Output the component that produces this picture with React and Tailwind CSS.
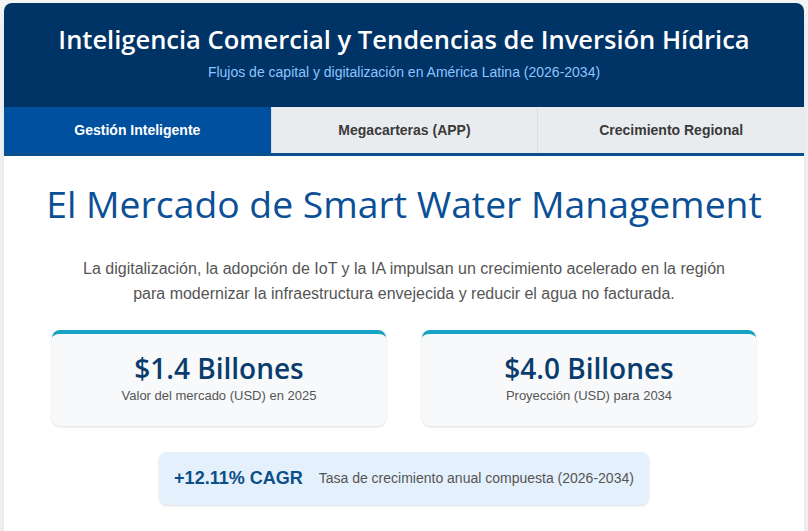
const tabs = ['Gestión Inteligente', 'Megacarteras (APP)', 'Crecimiento Regional'];

const stats = [
  { value: '$1.4 Billones', label: 'Valor del mercado (USD) en 2025' },
  { value: '$4.0 Billones', label: 'Proyección (USD) para 2034' },
];

const display = { fontFamily: '"Open Sans", "Noto Sans", sans-serif' };

export default function App() {
  return (
    <div className="min-h-screen bg-[#f3f4f6] px-[4px] pt-[3px]" style={{ fontFamily: '"Liberation Sans", Arial, sans-serif' }}>
      <div className="overflow-hidden rounded-t-lg bg-white shadow-lg">
        {/* Header */}
        <div className="flex h-[104px] flex-col items-center justify-center bg-[#003366] pb-[6px]">
          <h1 className="text-[25.5px] font-semibold leading-[32px] text-white" style={display}>
            Inteligencia Comercial y Tendencias de Inversión Hídrica
          </h1>
          <p className="mt-[7px] text-[14px] leading-[20px] text-[#8cc4ff]">
            Flujos de capital y digitalización en América Latina (2026-2034)
          </p>
        </div>

        {/* Tabs */}
        <div className="grid grid-cols-3 border-b-[3px] border-[#0b4f8a]">
          {tabs.map((tab, i) => (
            <button
              key={tab}
              type="button"
              className={
                i === 0
                  ? 'h-[46px] bg-[#0050a0] text-[14px] font-bold text-white'
                  : 'h-[46px] border-l border-[#d9dee4] bg-[#e9ecef] text-[14px] font-bold text-[#3a3a3a]'
              }
            >
              {tab}
            </button>
          ))}
        </div>

        {/* Content */}
        <div className="px-12 pt-[26px] pb-10 text-center">
          <h2 className="-mx-6 whitespace-nowrap text-[37.3px] font-medium leading-[44px] text-[#0b4f96]" style={display}>
            El Mercado de Smart Water Management
          </h2>
          <p className="mx-auto mt-[30px] max-w-[660px] text-[16px] leading-[25px] text-[#555555]">
            La digitalización, la adopción de IoT y la IA impulsan un crecimiento acelerado en la región
            para modernizar la infraestructura envejecida y reducir el agua no facturada.
          </p>

          <div className="mt-6 grid grid-cols-2 gap-9">
            {stats.map((s) => (
              <div
                key={s.value}
                className="rounded-lg border-t-4 border-[#17a3c3] bg-[#f7f9fb] pt-4 pb-5 shadow-sm"
              >
                <div className="text-[28px] font-semibold leading-[36px] text-[#0a3d6e]" style={display}>
                  {s.value}
                </div>
                <div className="text-[13px] leading-[20px] text-[#555555]">{s.label}</div>
              </div>
            ))}
          </div>

          <div className="mt-[26px] flex justify-center">
            <div className="flex h-[53px] items-center gap-4 rounded-lg bg-[#e4f0fb] px-[15px] shadow-sm">
              <span className="text-[18px] font-bold text-[#0b4f8a]">+12.11% CAGR</span>
              <span className="text-[14px] text-[#555555]">Tasa de crecimiento anual compuesta (2026-2034)</span>
            </div>
          </div>
        </div>
      </div>
    </div>
  );
}
